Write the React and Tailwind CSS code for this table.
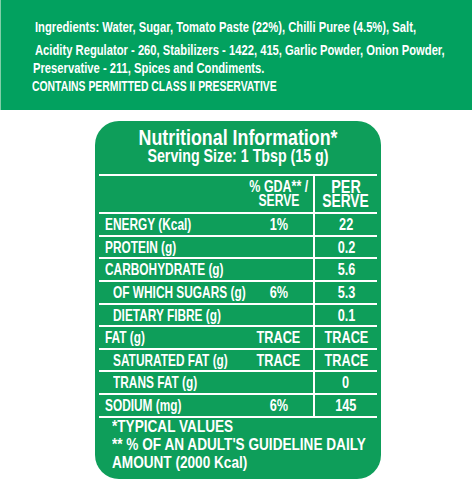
import React from "react";

const rows = [
  { label: "ENERGY (Kcal)", gda: "1%", val: "22" },
  { label: "PROTEIN (g)", gda: "", val: "0.2" },
  { label: "CARBOHYDRATE (g)", gda: "", val: "5.6" },
  { label: "OF WHICH SUGARS (g)", gda: "6%", val: "5.3", sub: true },
  { label: "DIETARY FIBRE (g)", gda: "", val: "0.1", sub: true },
  { label: "FAT (g)", gda: "TRACE", val: "TRACE" },
  { label: "SATURATED FAT (g)", gda: "TRACE", val: "TRACE", sub: true },
  { label: "TRANS FAT (g)", gda: "", val: "0", sub: true },
  { label: "SODIUM (mg)", gda: "6%", val: "145" },
];

export default function App() {
  return (
    <div
      className="w-[472px] h-[480px] bg-white overflow-hidden text-white font-bold"
      style={{ fontFamily: '"Liberation Sans", Arial, sans-serif' }}
    >
      <div className="h-[110px] bg-[#02a15f] border-l border-[#7fcfa8] pt-[18px] text-[15.5px] leading-[18px] overflow-hidden">
        <div className="pl-[34px]">
          <div className="origin-left scale-x-[0.724] whitespace-nowrap">
            Ingredients: Water, Sugar, Tomato Paste (22%), Chilli Puree (4.5%), Salt,
          </div>
        </div>
        <div className="pl-[34px] mt-[5px]">
          <div className="origin-left scale-x-[0.724] whitespace-nowrap">
            Acidity Regulator - 260, Stabilizers - 1422, 415, Garlic Powder, Onion Powder,
          </div>
        </div>
        <div className="pl-[32px]">
          <div className="origin-left scale-x-[0.724] whitespace-nowrap">
            Preservative - 211, Spices and Condiments.
          </div>
        </div>
        <div className="pl-[31px] text-[15px]">
          <div className="origin-left scale-x-[0.693] whitespace-nowrap">
            CONTAINS PERMITTED CLASS II PRESERVATIVE
          </div>
        </div>
      </div>

      <div className="ml-[95px] mt-[11px] w-[286px] h-[358px] rounded-[24px] bg-[#0e9e5a] pt-[8px] px-[4px]">
        <div className="text-center text-[22px] leading-[18px] scale-x-[0.81] whitespace-nowrap">
          Nutritional Information*
        </div>
        <div className="text-center text-[19px] leading-[18px] scale-x-[0.749] whitespace-nowrap">
          Serving Size: 1 Tbsp (15 g)
        </div>

        <div className="mt-[9px] border-b-2 border-white">
          <div className="flex h-[38px] border-t-2 border-white">
            <div className="flex-1 min-w-0" />
            <div className="w-[69px] shrink-0 flex flex-col items-center justify-center text-[16px] leading-[14px] whitespace-nowrap">
              <div className="scale-x-[0.78]">% GDA** /</div>
              <div className="scale-x-[0.76]">SERVE</div>
            </div>
            <div className="w-[2px] shrink-0 bg-white" />
            <div className="w-[62px] shrink-0 flex flex-col items-center justify-center text-[17.5px] leading-[14px] whitespace-nowrap">
              <div className="scale-x-[0.82]">PER</div>
              <div className="scale-x-[0.79]">SERVE</div>
            </div>
          </div>
          {rows.map((r) => (
            <div key={r.label} className="flex h-[22.65px] border-t-2 border-white items-stretch">
              <div
                className={
                  "flex-1 min-w-0 flex items-center text-[16.5px] whitespace-nowrap " +
                  (r.sub ? "pl-[14px]" : "pl-[6px]")
                }
              >
                <span className="inline-block origin-left scale-x-[0.72]">{r.label}</span>
              </div>
              <div className="w-[69px] shrink-0 flex items-center justify-center text-[16.5px] whitespace-nowrap">
                <span className="inline-block scale-x-[0.77]">{r.gda}</span>
              </div>
              <div className="w-[2px] shrink-0 bg-white" />
              <div className="w-[62px] shrink-0 flex items-center justify-center text-[16.5px] whitespace-nowrap">
                <span className="inline-block scale-x-[0.77]">{r.val}</span>
              </div>
            </div>
          ))}
        </div>

        <div className="pl-[13px] text-[17px] leading-[18px] whitespace-nowrap">
          <div className="origin-left scale-x-[0.8]">*TYPICAL VALUES</div>
          <div className="origin-left scale-x-[0.8]">** % OF AN ADULT'S GUIDELINE DAILY</div>
          <div className="origin-left scale-x-[0.8]">AMOUNT (2000 Kcal)</div>
        </div>
      </div>
    </div>
  );
}
